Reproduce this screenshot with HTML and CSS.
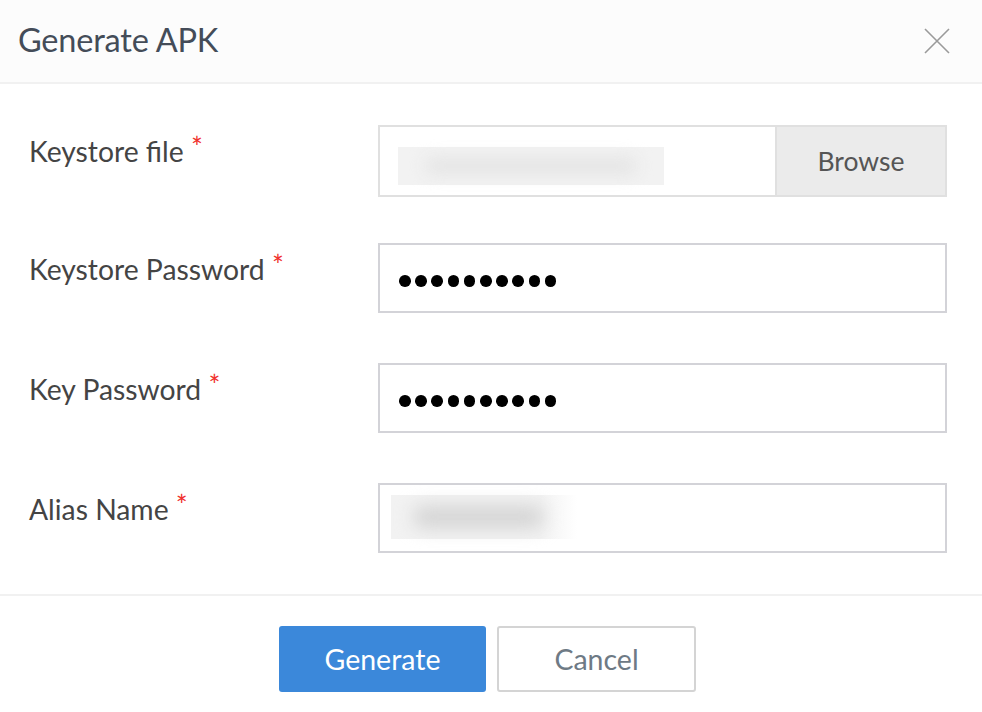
FILE: index.html
```html
<!DOCTYPE html>
<html>
<head>
<meta charset="utf-8">
<link rel="stylesheet" href="styles.css">
</head>
<body>
<div class="dialog">
  <div class="header">
    <h1 class="title">Generate APK</h1>
    <button class="close" aria-label="Close">
      <svg width="26" height="26" viewBox="0 0 26 26"><path d="M1 1 L25 25 M25 1 L1 25" stroke="#9a9a9a" stroke-width="1.6" fill="none"/></svg>
    </button>
  </div>
  <div class="body">
    <div class="row row-file">
      <label class="label">Keystore file <span class="req">*</span></label>
      <div class="field file">
        <div class="file-name"><div class="blur blur-file"></div></div>
        <div class="browse">Browse</div>
      </div>
    </div>
    <div class="row">
      <label class="label">Keystore Password <span class="req">*</span></label>
      <div class="field pw">
        <span class="dot"></span><span class="dot"></span><span class="dot"></span><span class="dot"></span><span class="dot"></span><span class="dot"></span><span class="dot"></span><span class="dot"></span><span class="dot"></span><span class="dot"></span>
      </div>
    </div>
    <div class="row">
      <label class="label">Key Password <span class="req">*</span></label>
      <div class="field pw">
        <span class="dot"></span><span class="dot"></span><span class="dot"></span><span class="dot"></span><span class="dot"></span><span class="dot"></span><span class="dot"></span><span class="dot"></span><span class="dot"></span><span class="dot"></span>
      </div>
    </div>
    <div class="row row-last">
      <label class="label">Alias Name <span class="req">*</span></label>
      <div class="field alias"><div class="blur blur-alias"></div></div>
    </div>
  </div>
  <div class="footer">
    <button class="btn primary">Generate</button>
    <button class="btn secondary">Cancel</button>
  </div>
</div>
</body>
</html>
```
FILE: styles.css
```css
* { box-sizing: border-box; }
html, body { margin: 0; padding: 0; background: #fff; }
body { font-family: Lato, "Noto Sans", sans-serif; }
.dialog { width: 982px; height: 712px; background: #fff; }
.header {
  height: 84px;
  background: #fcfcfc;
  border-bottom: 2px solid #f1f1f1;
  display: flex;
  align-items: center;
  justify-content: space-between;
  padding: 0 32px 0 18px;
}
.title {
  margin: 0;
  font-weight: 400;
  font-size: 32.5px;
  color: #444c58;
  letter-spacing: -0.2px;
  padding-bottom: 4px;
}
.close {
  border: 0; background: transparent; padding: 0;
  width: 26px; height: 26px; display: block;
}
.body { padding: 41px 35px 41px 29px; display: flex; flex-direction: column; border-bottom: 2px solid #f1f1f1; }
.row { display: flex; align-items: flex-start; height: 120px; }
.row-file { height: 118px; }
.row-last { height: 70px; }
.label {
  width: 349px;
  font-size: 28.3px;
  color: #444;
  padding-top: 9px;
  line-height: 34px;
}
.req { color: #f0302c; font-size: 28px; position: relative; top: -4px; }
.field {
  width: 569px; height: 70px;
  border: 2px solid #d3d3d8;
  background: #fff;
}
.file { display: flex; border-color: #e0e0e0; height: 72px; }
.file-name { flex: 1; position: relative; }
.browse {
  width: 170px; background: #ebebeb; border-left: 2px solid #e0e0e0;
  display: flex; align-items: center; justify-content: center;
  font-size: 26.5px; color: #555;
}
.blur { position: absolute; background: #f2f2f2; }
.blur::after {
  content: ""; position: absolute; left: 10%; right: 10%; top: 30%; bottom: 30%;
  background: #e4e4e4; filter: blur(8px); border-radius: 20px;
}
.blur-file { left: 18px; top: 20px; width: 266px; height: 38px; }
.alias { position: relative; }
.blur-alias { left: 11px; top: 10px; width: 186px; height: 44px;
  background: linear-gradient(90deg, #f2f2f2 0%, #f2f2f2 80%, #fff 100%); }
.blur-alias::after { left: 12%; right: 18%; top: 25%; bottom: 25%; background: #d4d4d4; filter: blur(9px); }
.pw { display: flex; align-items: center; gap: 4.6px; padding: 6px 0 0 19px; }
.dot { width: 11.6px; height: 11.6px; border-radius: 50%; background: #000; display: block; }
.footer {
  display: flex; justify-content: center; gap: 11px;
  padding: 30px 0 0 0; margin-left: -7px;
}
.btn {
  height: 66px; font-family: Lato, "Noto Sans", sans-serif; font-size: 28.5px;
  border-radius: 3px; cursor: pointer; padding: 0;
}
.primary { width: 207px; background: #3b88da; color: #fff; border: 0; }
.secondary { width: 199px; background: #fff; color: #6e7a85; border: 2px solid #d4d4d4; }
```
